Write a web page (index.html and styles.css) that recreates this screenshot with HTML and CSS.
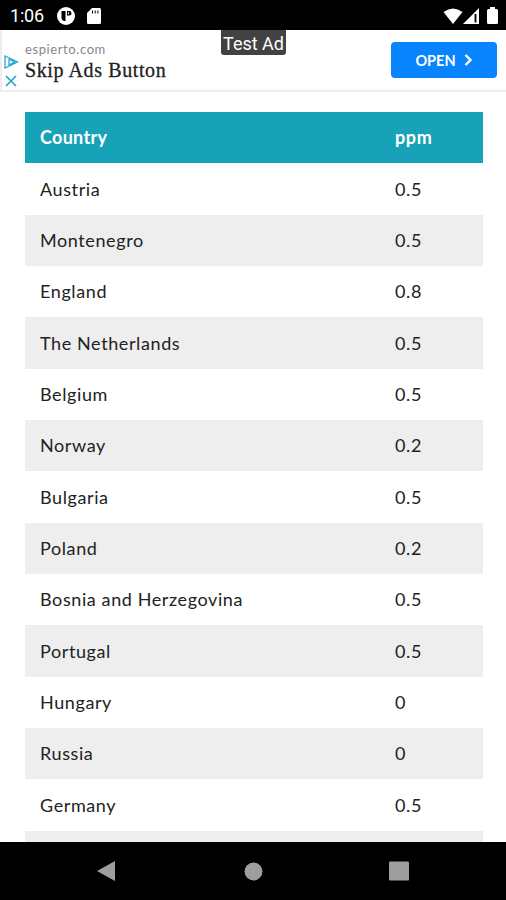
FILE: index.html
```html
<!DOCTYPE html>
<html lang="en">
<head>
    <meta charset="UTF-8">
    <meta name="viewport" content="width=device-width, initial-scale=1.0">
    <title>Country ppm</title>
    <link rel="stylesheet" href="styles.css">
</head>
<body>
    <div class="screen">
        <header class="status-bar">
            <span class="clock">1:06</span>
            <svg class="icon-app" width="18" height="18" viewBox="0 0 18 18">
                <circle cx="9" cy="9" r="9" fill="#fff"/>
                <path d="M4.500 4h4v10H7Q4.500 13.500 4.500 11zM10 4h2.500q2 0 2 2.300t-2 2.300H10z" fill="#000"/>
                <path d="M11.600 5.200v2" stroke="#fff" stroke-width="1"/>
            </svg>
            <svg class="icon-card" width="14" height="16" viewBox="0 0 14 16">
                <path d="M5 0h7.500Q14 0 14 1.500v13q0 1.500-1.500 1.500h-11Q0 16 0 14.500V5z" fill="#fff"/>
                <path d="M5.500 2.500v3M8.200 2.500v3M10.900 2.500v3" stroke="#000" stroke-width="1"/>
            </svg>
            <div class="status-right">
                <svg width="20" height="16" viewBox="0 0 20 16">
                    <path d="M0.500 4Q10-3 19.500 4L10 16z" fill="#fff"/>
                </svg>
                <svg width="16" height="16" viewBox="0 0 16 16">
                    <path d="M0 16L16 0v16z" fill="#fff"/>
                    <path d="M12.500 6v8.500" stroke="#000" stroke-width="1.800"/>
                </svg>
                <svg class="icon-battery" width="11" height="17" viewBox="0 0 11 17">
                    <path d="M3 0h5v2h1.500Q11 2 11 3.500v12q0 1.500-1.500 1.500h-8Q0 17 0 15.500v-12Q0 2 1.500 2H3z" fill="#fff"/>
                </svg>
            </div>
        </header>

        <section class="ad">
            <div class="ad-icons">
                <svg width="15" height="14" viewBox="0 0 15 14" fill="none" stroke="#20a9d0" stroke-width="1.300">
                    <path d="M1 1L13.500 7L1 13zM5 4v6L10.500 7L5 4"/>
                </svg>
                <svg width="14" height="12" viewBox="0 0 14 12" stroke="#20a9d0" stroke-width="1.700">
                    <path d="M2 1l10 10M12 1L2 11"/>
                </svg>
            </div>
            <div class="ad-text">
                <span class="ad-site">espierto.com</span>
                <span class="ad-title">Skip Ads Button</span>
            </div>
            <a class="ad-button">OPEN
                <svg width="9" height="12" viewBox="0 0 9 12" fill="none" stroke="#fff" stroke-width="2.400">
                    <path d="M1.500 1l5 5l-5 5"/>
                </svg>
            </a>
            <span class="test-label">Test Ad</span>
        </section>

        <main class="content">
            <table class="ppm-table">
                <thead>
                    <tr><th>Country</th><th>ppm</th></tr>
                </thead>
                <tbody>
                    <tr><td>Austria</td><td>0.5</td></tr>
                    <tr><td>Montenegro</td><td>0.5</td></tr>
                    <tr><td>England</td><td>0.8</td></tr>
                    <tr><td>The Netherlands</td><td>0.5</td></tr>
                    <tr><td>Belgium</td><td>0.5</td></tr>
                    <tr><td>Norway</td><td>0.2</td></tr>
                    <tr><td>Bulgaria</td><td>0.5</td></tr>
                    <tr><td>Poland</td><td>0.2</td></tr>
                    <tr><td>Bosnia and Herzegovina</td><td>0.5</td></tr>
                    <tr><td>Portugal</td><td>0.5</td></tr>
                    <tr><td>Hungary</td><td>0</td></tr>
                    <tr><td>Russia</td><td>0</td></tr>
                    <tr><td>Germany</td><td>0.5</td></tr>
                    <tr><td></td><td></td></tr>
                </tbody>
            </table>
        </main>

        <nav class="nav-bar">
            <svg width="20" height="20" viewBox="0 0 20 20"><path d="M0 10L18 0v20z" fill="#9e9e9e"/></svg>
            <svg width="19" height="19" viewBox="0 0 19 19"><circle cx="9.5" cy="9.5" r="9" fill="#9e9e9e"/></svg>
            <svg width="20" height="20" viewBox="0 0 20 20"><rect width="20" height="19" y=".5" rx="1" fill="#9e9e9e"/></svg>
        </nav>
    </div>
</body>
</html>
```
FILE: styles.css
```css
body {
    margin: 0;
    background-color: #fff;
    font-family: Lato, sans-serif;
}
.screen {
    display: flex;
    flex-direction: column;
    height: 900px;
    overflow: hidden;
}
svg {
    display: block;
    flex-shrink: 0;
}

/* status bar */
.status-bar {
    display: flex;
    align-items: center;
    flex: 0 0 30px;
    box-sizing: border-box;
    padding: 1px 8px 0 10px;
    background-color: #000;
    color: #fff;
}
.clock {
    width: 47px;
    font: 400 18px/28px Roboto, sans-serif;
    letter-spacing: -0.2px;
}
.icon-card {
    margin-left: 12px;
}
.status-right {
    display: flex;
    align-items: center;
    margin-left: auto;
}
.icon-battery {
    margin-left: 8px;
}

/* ad banner */
.ad {
    position: relative;
    display: flex;
    align-items: center;
    flex: 0 0 62px;
    box-sizing: border-box;
    padding-right: 9px;
    border-left: 2px solid #eee;
    border-bottom: 2px solid #eee;
}
.ad-icons {
    display: flex;
    flex-direction: column;
    gap: 6px;
    width: 23px;
    padding: 22px 0 0 2px;
    box-sizing: border-box;
}
.ad-text {
    display: flex;
    flex-direction: column;
    padding-top: 2px;
    white-space: nowrap;
}
.ad-site {
    color: #888;
    font-size: 13px;
    line-height: 17px;
    letter-spacing: 0.6px;
}
.ad-title {
    color: #222;
    font: 20px/24px "Liberation Serif", serif;
    letter-spacing: 0.6px;
    -webkit-text-stroke: 0.3px #222;
}
.ad-button {
    display: flex;
    align-items: center;
    justify-content: center;
    gap: 8px;
    width: 106px;
    height: 36px;
    margin-left: auto;
    border-radius: 4px;
    background-color: #0984ff;
    color: #fff;
    font-size: 14.5px;
    font-weight: 700;
}
.test-label {
    position: absolute;
    top: 0;
    left: 219px;
    width: 65px;
    height: 25px;
    border-radius: 0 0 3px 3px;
    background-color: #424242;
    color: #fff;
    font: 18px/27px Roboto, sans-serif;
    text-align: center;
    white-space: nowrap;
}

/* table */
.content {
    flex: 1;
    min-height: 0;
    overflow: hidden;
    padding: 20px 23px 0 25px;
}
.ppm-table {
    width: 100%;
    table-layout: fixed;
    border-collapse: collapse;
    color: #222;
    font-size: 18px;
    letter-spacing: 0.6px;
}
.ppm-table th,
.ppm-table td {
    box-sizing: border-box;
    height: 51.35px;
    padding: 0 0 1px 15px;
    text-align: left;
}
.ppm-table th:first-child {
    width: 355px;
    letter-spacing: 0.3px;
}
.ppm-table thead {
    background-color: #17a2b8;
    color: #fff;
}
.ppm-table tbody tr:nth-child(even) {
    background-color: #eee;
}

/* android navigation */
.nav-bar {
    display: flex;
    align-items: center;
    justify-content: space-between;
    flex: 0 0 58px;
    box-sizing: border-box;
    padding: 0 97px;
    background-color: #000;
}
```
